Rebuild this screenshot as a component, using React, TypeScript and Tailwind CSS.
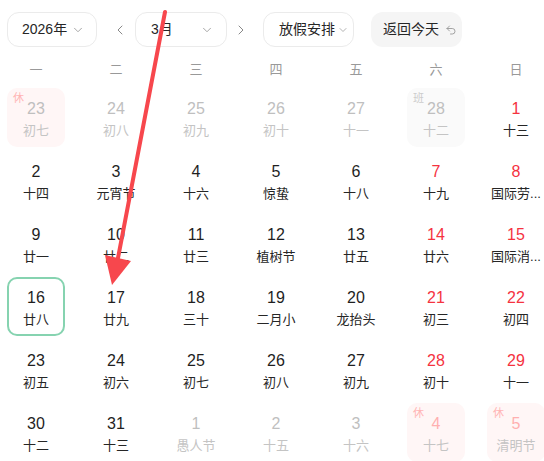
import React from 'react';
import { ChevronDown, ChevronLeft, ChevronRight, Undo2 } from 'lucide-react';

type Kind = 'prev' | 'cur' | 'next';
interface Day {
  d: number;
  sub: string;
  kind: Kind;
  weekend?: boolean;
  tag?: '休' | '班';
  selected?: boolean;
}

const rows: Day[][] = [
  [
    { d: 23, sub: '初七', kind: 'prev', tag: '休' },
    { d: 24, sub: '初八', kind: 'prev' },
    { d: 25, sub: '初九', kind: 'prev' },
    { d: 26, sub: '初十', kind: 'prev' },
    { d: 27, sub: '十一', kind: 'prev' },
    { d: 28, sub: '十二', kind: 'prev', tag: '班' },
    { d: 1, sub: '十三', kind: 'cur', weekend: true },
  ],
  [
    { d: 2, sub: '十四', kind: 'cur' },
    { d: 3, sub: '元宵节', kind: 'cur' },
    { d: 4, sub: '十六', kind: 'cur' },
    { d: 5, sub: '惊蛰', kind: 'cur' },
    { d: 6, sub: '十八', kind: 'cur' },
    { d: 7, sub: '十九', kind: 'cur', weekend: true },
    { d: 8, sub: '国际劳...', kind: 'cur', weekend: true },
  ],
  [
    { d: 9, sub: '廿一', kind: 'cur' },
    { d: 10, sub: '廿二', kind: 'cur' },
    { d: 11, sub: '廿三', kind: 'cur' },
    { d: 12, sub: '植树节', kind: 'cur' },
    { d: 13, sub: '廿五', kind: 'cur' },
    { d: 14, sub: '廿六', kind: 'cur', weekend: true },
    { d: 15, sub: '国际消...', kind: 'cur', weekend: true },
  ],
  [
    { d: 16, sub: '廿八', kind: 'cur', selected: true },
    { d: 17, sub: '廿九', kind: 'cur' },
    { d: 18, sub: '三十', kind: 'cur' },
    { d: 19, sub: '二月小', kind: 'cur' },
    { d: 20, sub: '龙抬头', kind: 'cur' },
    { d: 21, sub: '初三', kind: 'cur', weekend: true },
    { d: 22, sub: '初四', kind: 'cur', weekend: true },
  ],
  [
    { d: 23, sub: '初五', kind: 'cur' },
    { d: 24, sub: '初六', kind: 'cur' },
    { d: 25, sub: '初七', kind: 'cur' },
    { d: 26, sub: '初八', kind: 'cur' },
    { d: 27, sub: '初九', kind: 'cur' },
    { d: 28, sub: '初十', kind: 'cur', weekend: true },
    { d: 29, sub: '十一', kind: 'cur', weekend: true },
  ],
  [
    { d: 30, sub: '十二', kind: 'cur' },
    { d: 31, sub: '十三', kind: 'cur' },
    { d: 1, sub: '愚人节', kind: 'next' },
    { d: 2, sub: '十五', kind: 'next' },
    { d: 3, sub: '十六', kind: 'next' },
    { d: 4, sub: '十七', kind: 'next', tag: '休' },
    { d: 5, sub: '清明节', kind: 'next', tag: '休' },
  ],
];

const weekdays = ['一', '二', '三', '四', '五', '六', '日'];

/* ── one day cell ── */
function DayCell({ day }: { day: Day }) {
  const faded = day.kind !== 'cur';
  const holiday = day.tag === '休';
  const work = day.tag === '班';

  let numColor = 'text-[#1f1f1f]';
  if (faded) numColor = holiday && day.kind === 'next' ? 'text-[#ffb0b0]' : 'text-[#bfbfbf]';
  else if (day.weekend) numColor = 'text-[#f5333f]';

  const subColor = faded ? 'text-[#c4c4c4]' : 'text-[#262626]';

  let box = 'border-2 border-transparent';
  if (day.selected) box = 'border-2 border-[#86d3b0]';
  else if (holiday) box = 'border-2 border-transparent bg-[#fff6f6]';
  else if (work) box = 'border-2 border-transparent bg-[#fafafa]';

  return (
    <div className={`relative h-[59px] rounded-[10px] flex flex-col items-center pt-[9px] ${box}`}>
      {day.tag && (
        <span
          className={`absolute left-[4px] top-[2px] text-[11px] leading-[13px] ${
            holiday ? 'text-[#ffb4b4]' : 'text-[#cccccc]'
          }`}
        >
          {day.tag}
        </span>
      )}
      <span className={`text-[16px] leading-[20px] ${numColor}`}>{day.d}</span>
      <span className={`mt-[3px] text-[13px] leading-[18px] whitespace-nowrap ${subColor}`}>{day.sub}</span>
    </div>
  );
}

export default function App() {
  return (
    <div
      className="relative w-[544px] h-[461px] overflow-hidden bg-white"
      style={{ fontFamily: '"Liberation Sans", "Noto Sans CJK SC", sans-serif' }}
    >
      <div className="pl-[7px] pt-[12px]">
        {/* Toolbar */}
        <div className="flex items-center h-[35px] text-[14px] text-[#262626] whitespace-nowrap">
          <div className="shrink-0 w-[90px] h-[35px] rounded-[12px] border border-[#ebebeb] flex items-center justify-between pl-[14px] pr-[11px]">
            <span>2026年</span>
            <ChevronDown className="w-[14px] h-[14px] text-[#999]" strokeWidth={1.5} />
          </div>
          <ChevronLeft className="shrink-0 ml-[15px] w-[16px] h-[16px] text-[#888]" strokeWidth={1.5} />
          <div className="shrink-0 ml-[7px] w-[92px] h-[35px] rounded-[12px] border border-[#ebebeb] flex items-center justify-between pl-[15px] pr-[12px]">
            <span>3月</span>
            <ChevronDown className="w-[14px] h-[14px] text-[#999]" strokeWidth={1.5} />
          </div>
          <ChevronRight className="shrink-0 ml-[6px] w-[16px] h-[16px] text-[#888]" strokeWidth={1.5} />
          <div className="shrink-0 ml-[14px] w-[91px] h-[35px] rounded-[12px] border border-[#ebebeb] flex items-center pl-[15px] gap-[2px]">
            <span>放假安排</span>
            <ChevronDown className="shrink-0 w-[12px] h-[12px] text-[#999]" strokeWidth={1.5} />
          </div>
          <div className="shrink-0 ml-[17px] w-[91px] h-[35px] rounded-[12px] bg-[#f5f5f5] flex items-center pl-[12px] gap-[6px]">
            <span>返回今天</span>
            <Undo2 className="shrink-0 w-[12px] h-[12px] text-[#999]" strokeWidth={1.8} />
          </div>
        </div>

        {/* Weekday header */}
        <div className="mt-[11px] grid grid-cols-[repeat(7,58px)] gap-x-[22px] h-[24px] items-center text-[13px] text-[#999]">
          {weekdays.map((w) => (
            <div key={w} className="text-center">
              {w}
            </div>
          ))}
        </div>

        {/* Days */}
        <div className="mt-[6px] grid grid-cols-[repeat(7,58px)] gap-x-[22px] gap-y-[4px]">
          {rows.flat().map((day, i) => (
            <DayCell key={i} day={day} />
          ))}
        </div>
      </div>

      {/* Annotation arrow */}
      <svg className="absolute inset-0 pointer-events-none" width="544" height="461" viewBox="0 0 544 461">
        <line x1="165" y1="12" x2="118" y2="258" stroke="#f7474d" strokeWidth="4" strokeLinecap="round" />
        <polygon points="105,255 131,261 112,285" fill="#f7474d" />
      </svg>
    </div>
  );
}
